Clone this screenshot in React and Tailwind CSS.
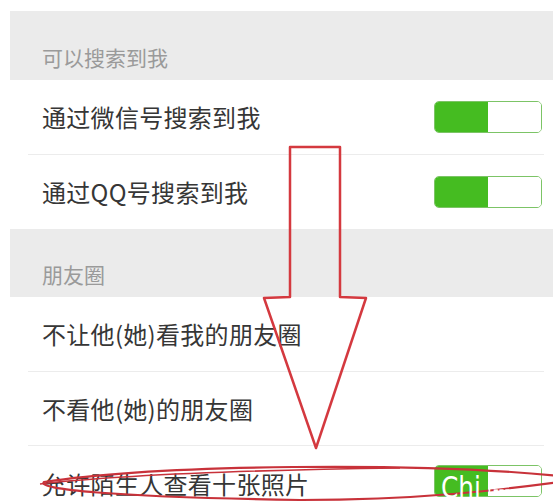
import React from "react";

const FONT = { fontFamily: '"Noto Sans CJK SC", "Noto Sans", sans-serif' };

function Toggle() {
  return (
    <div className="flex w-[108px] h-[32px] rounded-[5px] overflow-hidden border border-[#7cc466] shrink-0">
      <div className="w-[53px] h-full bg-[#45bc21]" />
      <div className="flex-1 h-full bg-white" />
    </div>
  );
}

function Header({ children, h = "h-[69px]" }) {
  return (
    <div className={`${h} bg-[#ebebeb] flex items-end pb-[12px] pl-[32px]`}>
      <span className="text-[21px] leading-none text-[#9a9a9a]">{children}</span>
    </div>
  );
}

function Row({ children, toggle, h = "h-[74px]" }) {
  return (
    <div className={`${h} flex items-center justify-between pl-[32px] pr-[11px]`}>
      <span className="text-[24px] leading-none text-[#363636] tracking-[0.3px]">{children}</span>
      {toggle && <Toggle />}
    </div>
  );
}

function Divider() {
  return <div className="ml-[18px] mr-[9px] h-px bg-[#ececec]" />;
}

export default function App() {
  return (
    <div className="relative w-[553px] h-[502px] overflow-hidden bg-white pt-[11px] pl-[10px]" style={FONT}>
      <Header>可以搜索到我</Header>
      <Row toggle>通过微信号搜索到我</Row>
      <Divider />
      <Row toggle>通过QQ号搜索到我</Row>
      <Header h="h-[68px]">朋友圈</Header>
      <Row>不让他(她)看我的朋友圈</Row>
      <Divider />
      <Row h="h-[73px]">不看他(她)的朋友圈</Row>
      <Divider />
      <div className="h-[74px] flex items-center justify-between pl-[32px] pr-[11px] pt-[2px]">
        <span className="text-[24px] leading-none text-[#363636] tracking-[0.3px]">允许陌生人查看十张照片</span>
        <div className="-mt-[6px]"><Toggle /></div>
      </div>

      <svg className="absolute inset-0 pointer-events-none" width="553" height="502" viewBox="0 0 553 502">
        <path
          d="M290,147 L340,147 L340,297 L366,298 L316,448 L264,298 L290,297 Z"
          fill="none"
          stroke="#d4393f"
          strokeWidth="2.5"
          strokeLinejoin="round"
        />
        <path
          d="M560,476 C420,462 160,464 44,482 C36,489 110,497 300,500 C420,500 500,490 560,482"
          fill="none"
          stroke="#c8323a"
          strokeWidth="2.2"
        />
        <path d="M40,484 C120,475 250,470 400,468" fill="none" stroke="#c8323a" strokeWidth="1.6" />
      </svg>

      <div
        className="absolute left-[441px] top-[472px] flex items-end text-white leading-none origin-left scale-x-[0.8]"
        style={{ fontFamily: '"DejaVu Sans", "Liberation Sans", sans-serif' }}
      >
        <span className="text-[31px]">Chi</span>
        <span className="text-[20px] ml-[8px] mb-[4px]">r-----</span>
      </div>
    </div>
  );
}
